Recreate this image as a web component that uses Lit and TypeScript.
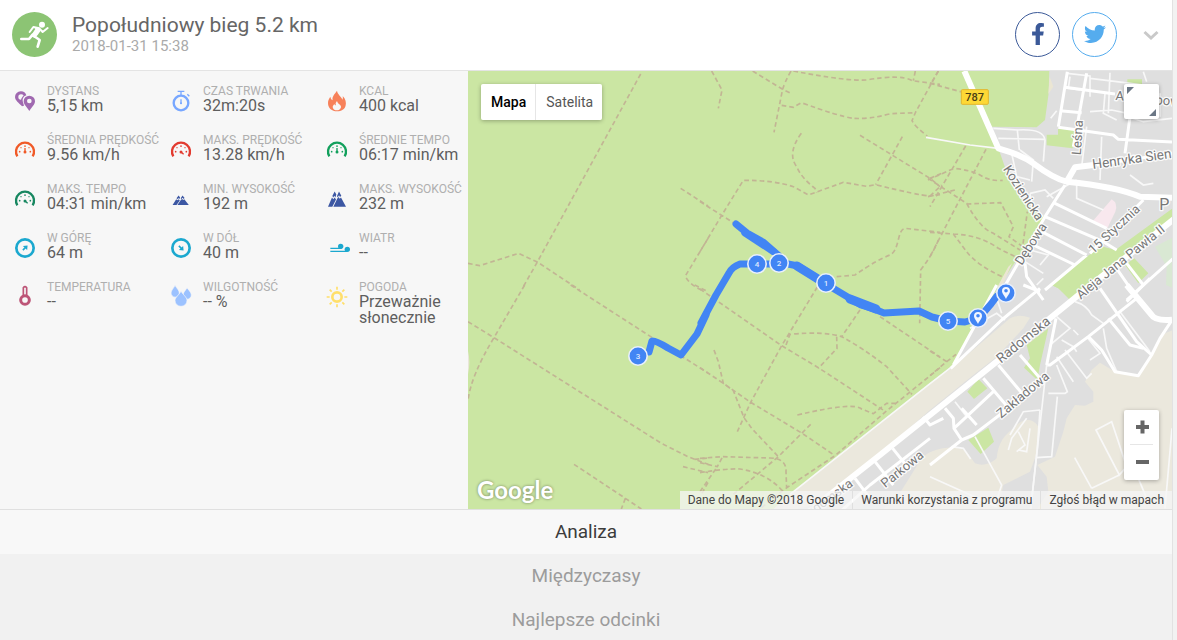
import { LitElement, html, svg, css, type SVGTemplateResult } from "lit";
import { customElement, state, property } from "lit/decorators.js";

interface Stat {
  label: string;
  value: string;
  icon: SVGTemplateResult;
}

const gauge = (color: string, dx: number, dy: number) => svg`
  <path d="M7 49 A27 27 0 1 1 53 49" fill="none" stroke=${color} stroke-width="7" />
  <g fill=${color}>
    <rect x="28" y="16" width="4" height="5" /><circle cx="18" cy="23" r="2" /><circle cx="42" cy="23" r="2" />
    <circle cx="14" cy="35" r="2.5" /><circle cx="46" cy="35" r="2.5" /><circle cx="30" cy="36" r="4.5" />
  </g>
  <path d="M30 36 l${dx} ${dy}" stroke=${color} stroke-width="4" />`;

const peaks = svg`
  <path d="M2 52 L14 25 L18 30 L22 25 L26 31 L15 52 Z M18 52 L30 28 L34 24 L37 29 L41 25 L56 52 Z" fill="#3c57a3" />
  <path d="M15 21 L22 8 L27 17 L24 25 L21 20 L18 25 Z M29 21 L35 8 L42 20 L38 24 L35 19 L31 25 Z" fill="#3c57a3" />`;

const arrowDisc = (angle: number) => svg`
  <circle cx="30" cy="30" r="26" fill="none" stroke="#1ba8cf" stroke-width="8" />
  <g transform="rotate(${angle} 30 30)"><path d="M21 30 H32" stroke="#1ba8cf" stroke-width="5" /><path d="M30 21 L41 30 L30 39 Z" fill="#1ba8cf" /></g>`;

const STATS: Stat[] = [
  {
    label: "DYSTANS", value: "5,15 km",
    icon: svg`<path fill-rule="evenodd" fill="#a069b0" d="M17 1 A17 17 0 0 1 34 13 C25 16 21 24 24 34 L27 44 L21 46 C12 36 0 28 0 18 A17 17 0 0 1 17 1 Z M18 10 A8 8 0 1 0 18 26 C20 20 23 15 26 14 A9 9 0 0 0 18 10 Z" />
      <path fill-rule="evenodd" fill="#a069b0" d="M43 14 A17 17 0 0 1 60 31 C60 41 49 50 43 60 C37 50 26 41 26 31 A17 17 0 0 1 43 14 Z M43 23 A7 7 0 1 0 43 37 A7 7 0 1 0 43 23 Z" />`,
  },
  {
    label: "CZAS TRWANIA", value: "32m:20s",
    icon: svg`<circle cx="30" cy="36" r="22" fill="none" stroke="#78a7ff" stroke-width="7" />
      <path d="M20 1 H40 M30 1 V12 M49 10 L55 16 M30 25 V39" stroke="#78a7ff" stroke-width="4" /><circle cx="30" cy="37" r="3" fill="#78a7ff" />`,
  },
  {
    label: "KCAL", value: "400 kcal",
    icon: svg`<path fill="#f7815a" fill-rule="evenodd" d="M30 -1 C31 10 43 16 46 26 C48 22 48 18 47 15 C56 24 58 35 56 43 C54 55 43 61 30 61 C15 61 3 52 3 36 C3 27 7 22 10 17 C11 23 13 26 17 28 C14 17 23 9 30 -1 Z M30 30 C32 40 43 40 42 49 C40 57 34 58 30 58 C23 58 17 54 17 47 C18 44 20 41 22 39 C23 42 25 43 27 43 C24 37 27 34 30 30 Z" />`,
  },
  { label: "ŚREDNIA PRĘDKOŚĆ", value: "9.56 km/h", icon: gauge("#f05a28", 0, -12) },
  { label: "MAKS. PRĘDKOŚĆ", value: "13.28 km/h", icon: gauge("#e23b30", 8, 7) },
  { label: "ŚREDNIE TEMPO", value: "06:17 min/km", icon: gauge("#12a05c", 0, -12) },
  { label: "MAKS. TEMPO", value: "04:31 min/km", icon: gauge("#178760", 8, 7) },
  { label: "MIN. WYSOKOŚĆ", value: "192 m", icon: svg`<g transform="translate(3 14) scale(0.9 0.66)">${peaks}</g>` },
  { label: "MAKS. WYSOKOŚĆ", value: "232 m", icon: svg`<g transform="translate(1 -1) scale(1 1.05)">${peaks}</g>` },
  { label: "W GÓRĘ", value: "64 m", icon: arrowDisc(-45) },
  { label: "W DÓŁ", value: "40 m", icon: arrowDisc(45) },
  {
    label: "WIATR", value: "--",
    icon: svg`<path d="M10 31 H44 M10 40 H60" stroke="#1ba8cf" stroke-width="4" /><circle cx="41" cy="25" r="8" fill="#1ba8cf" /><circle cx="61" cy="34" r="8" fill="#1ba8cf" />`,
  },
  {
    label: "TEMPERATURA", value: "--",
    icon: svg`<circle cx="30" cy="39" r="13" fill="none" stroke="#bd5577" stroke-width="9" /><path d="M25 28 V2 Q30 -4 35 2 V28" fill="none" stroke="#bd5577" stroke-width="5" />`,
  },
  {
    label: "WILGOTNOŚĆ", value: "-- %",
    icon: svg`<g fill="#9cc2ff" stroke="#f7f7f7" stroke-width="2"><path d="M12 -5 C17 4 25 10 25 18 A12 12 0 0 1 0 18 C0 10 8 4 12 -5 Z" /><path d="M48 2 C52 9 61 15 61 24 A12 12 0 0 1 36 24 C36 16 44 10 48 2 Z" /><path d="M30 12 C36 24 48 30 48 41 A18 17 0 0 1 12 41 C12 30 25 24 30 12 Z" /></g>`,
  },
  {
    label: "POGODA", value: "Przeważnie słonecznie",
    icon: svg`<circle cx="30" cy="30" r="14" fill="none" stroke="#ffdf6b" stroke-width="8" />
      <path d="M30 -1 V8 M30 52 V61 M-1 30 H8 M52 30 H61 M8 8 L14 14 M46 46 L52 52 M52 8 L46 14 M14 46 L8 52" stroke="#ffdf6b" stroke-width="5" />`,
  },
];

const TABS = ["Analiza", "Międzyczasy", "Najlepsze odcinki"];

interface Trails { x: number; y: number; d: string }

const TRAILS: Trails[] = [
  { x: 0, y: -3, d: "M518 12 L208 576 L162 657 M0 580 L35 587 L152 550 L208 576 L335 660 M638 355 L720 408 M720 505 L652 618 Q662 642 700 660" },
  { x: 696, y: -3, d: "M35 3 L66 60 L55 115 M158 3 L248 58 L272 70 M273 3 Q252 40 247 62 L222 187 M280 3 Q440 34 500 30 Q600 12 637 32 L720 43 M646 3 L640 32 M245 106 L280 112 L304 98 Q420 140 460 145 Q510 148 572 131 L647 128 M715 3 L647 126 L636 152 Q645 170 682 198 M304 190 Q260 250 290 290 Q305 325 345 355 L350 368 M480 196 L690 325 L720 350 M607 200 L527 344 M0 395 L100 458 M0 545 L65 436 L130 331 Q220 330 280 350 L325 375 L430 337 L500 349 L527 344 Q650 375 690 378 L720 374 M410 620 L465 615 Q530 570 570 555 C600 540 590 480 615 475 L720 487 M715 510 Q700 550 662 600 L659 760 M690 325 L725 310 M690 378 L725 345" },
  { x: 1386, y: -3, d: "M25 3 L0 45 M0 40 L95 66 M107 228 L0 410 M168 238 L0 560 M-6 330 L72 295 Q120 300 150 315 Q180 335 218 331 M-6 325 L110 400 Q150 475 190 490 L270 540 M-6 380 L75 360 M110 402 L212 398 L250 470 L237 500 L278 530 L292 425 M0 487 L70 492 L110 545 Q140 585 220 622 M70 492 Q150 495 205 535 L270 567" },
  { x: 0, y: 642, d: "M170 0 L78 158 Q10 270 0 345 M0 110 L78 158 L580 475 L660 515 L720 538 M308 0 L553 158 L720 264 M680 0 L720 20 M318 538 L472 640 L520 672 M472 640 L460 672 M645 545 L720 563 M680 523 L720 519 M702 625 L720 592" },
  { x: 696, y: 642, d: "M0 12 L245 182 L355 248 L557 380 M352 6 L245 182 L152 352 L112 440 M42 195 L55 230 L70 295 L100 317 L132 398 L155 430 L235 515 M0 248 L70 295 L152 352 L305 444 L405 512 M258 180 L270 148 Q370 138 425 155 Q490 190 560 245 L636 328 M480 75 L425 155 M410 155 L411 190 L355 250 M540 95 L720 216 M720 248 L557 380 L405 512 L250 615 L180 672 M292 390 Q460 350 485 372 L520 386 L560 355 L592 355 M332 418 L235 515 L100 628 M0 520 L65 515 L210 519 Q260 520 258 560 L260 610 M0 533 L52 545 L68 515 M0 563 Q80 550 120 552 Q200 565 245 615 M0 620 L52 545" },
  { x: 1386, y: 642, d: "M0 198 L50 230 L0 272 M50 230 L78 208" },
];

const LABELS: { text: string; x: number; y: number; angle: number; size?: number }[] = [
  { text: "Leśna", x: 1386 + 452, y: 253, angle: -86 },
  { text: "Henryka Sien", x: 1386 + 489, y: 294, angle: -8, size: 41 },
  { text: "Kozienicka", x: 1386 + 218, y: 294, angle: 57 },
  { text: "Dębowa", x: 1386 + 275, y: 585, angle: -57 },
  { text: "15 Stycznia", x: 1386 + 490, y: 550, angle: -43, size: 38 },
  { text: "Aleja Jana Pawła II", x: 1386 + 452, y: 686, angle: -39 },
  { text: "Radomska", x: 1386 + 213, y: 878, angle: -39, size: 41 },
  { text: "Zakładowa", x: 1386 + 214, y: 1043, angle: -40 },
  { text: "Parkowa", x: 696 + 556, y: 1252, angle: -39 },
  { text: "Radomska", x: 696 + 312, y: 1352, angle: -36 },
  { text: "A", x: 1386 + 556, y: 87, angle: 4 },
  { text: "pow", x: 1386 + 676, y: 100, angle: 4 },
];

const KM_MARKS = [
  { n: "3", x: 638, y: 356 },
  { n: "4", x: 757, y: 264 },
  { n: "2", x: 779, y: 263 },
  { n: "1", x: 826, y: 283 },
  { n: "5", x: 948, y: 321 },
];
const PINS = [{ x: 978, y: 318 }, { x: 1006, y: 293 }];

@customElement("stat-list")
class StatList extends LitElement {
  @property({ attribute: false }) stats: Stat[] = [];

  static styles = css`
    :host { display: block; min-width: 0; }
    .list { margin: 0; display: grid; grid-template-columns: repeat(3, minmax(0, 1fr)); row-gap: 20px; padding-top: 14px; }
    .stat { display: grid; grid-template-columns: 20px minmax(0, 1fr); grid-template-rows: 13px auto; column-gap: 12px; padding-left: 15px; align-items: start; align-content: start; }
    .icon { grid-row: 1 / span 2; width: 20px; height: 20px; margin-top: 6px; overflow: visible; }
    .label { font-size: 12px; line-height: 13px; color: #afafaf; white-space: nowrap; }
    .value { margin: 0; font-size: 16px; line-height: 16px; color: #5e5e5e; }
  `;

  render() {
    return html`<dl class="list">
      ${this.stats.map((s) => html`<div class="stat">
        <svg class="icon" viewBox="0 0 60 60" aria-hidden="true">${s.icon}</svg>
        <dt class="label">${s.label}</dt>
        <dd class="value">${s.value}</dd>
      </div>`)}
    </dl>`;
  }
}

@customElement("route-map")
class RouteMap extends LitElement {
  @state() private view = "Mapa";

  static styles = css`
    :host { display: block; position: relative; overflow: hidden; background: #cbe6a3; min-width: 0; min-height: 438px; }
    .canvas { position: absolute; inset: 0; width: 100%; height: 100%; }
    .street { fill: #777; stroke: #fff; stroke-width: 8px; stroke-opacity: 0.85; paint-order: stroke; stroke-linejoin: round; }
    .trail { fill: none; stroke: #c2b594; stroke-width: 5px; stroke-dasharray: 14 9; }
    .thin { fill: none; stroke: #f8f8f8; stroke-width: 5px; }
    .lane { fill: none; stroke: #fff; stroke-width: 9px; stroke-linejoin: round; }
    .road { fill: none; stroke: #fff; stroke-width: 18px; stroke-linejoin: round; }
    .types { position: absolute; top: 13px; left: 13px; display: flex; border-radius: 2px; overflow: hidden; box-shadow: 0 1px 4px rgba(0, 0, 0, 0.3); }
    .type { font: 400 14px/36px Roboto, sans-serif; border: 0; padding: 0 9px 0 10px; background: #fff; color: #565656; height: 36px; }
    .type + .type { border-left: 1px solid #e6e6e6; }
    .type.on { color: #000; font-weight: 500; }
    .full, .zoom { position: absolute; right: 13px; width: 35px; background: #fff; border-radius: 2px; box-shadow: 0 1px 4px rgba(0, 0, 0, 0.3); }
    .full { top: 13px; height: 35px; border: 0; padding: 0; }
    .full svg, .step svg { display: block; width: 35px; height: 35px; }
    .zoom { bottom: 29px; display: flex; flex-direction: column; }
    .step { border: 0; padding: 0; background: none; height: 35px; }
    .rule { height: 1px; margin: -1px 6px 0; background: #e6e6e6; }
    .google { position: absolute; left: 9px; bottom: 3px; font: 700 24px/32px Lato, sans-serif; color: #fff; text-decoration: none; text-shadow: 0 0 3px rgba(0, 0, 0, 0.45); }
    .credits { position: absolute; right: 0; bottom: 0; display: flex; gap: 1px; font-size: 12px; line-height: 18px; color: #444; white-space: nowrap; }
    .credit { padding: 0 8px; background: rgba(245, 245, 245, 0.75); color: #444; text-decoration: none; }
  `;

  private terrain() {
    return svg`
      <g transform="translate(1386 -3)">
        <path fill="#dfdfdf" d="M358 0 L356 70 L345 150 L320 172 L183 170 L205 235 L235 320 L270 385 L345 440 L200 660 L130 775 L70 885 L0 940 L-490 1335 H800 V0 Z" />
        <path fill="#ebe6d3" d="M359 20 L370 50 L355 72 Z M235 590 L246 580 L215 650 L200 655 Z" />
        <path fill="#cbe6a3" d="M592 28 H636 V62 H592 Z M384 176 L435 180 L428 235 L350 226 V194 H384 Z M741 405 L556 540 L520 530 L490 545 L432 590 L365 645 L385 655 L425 690 L556 590 L741 450 Z M585 585 L613 565 L655 610 L625 640 Z" />
        <path fill="#d9e8d3" d="M741 495 L675 530 L710 590 L708 645 L741 660 Z" />
        <path fill="#f8e8ee" d="M545 388 Q565 400 556 425 L532 475 L486 456 Z" />
      </g>
      <g transform="translate(1386 642)">
        <path fill="#ebe8dd" d="M65 250 L240 100 Q265 86 300 98 L280 130 L200 215 L130 270 L0 375 L-320 655 L-490 690 L-420 628 L0 295 Z" />
        <path fill="#ebe8dd" d="M741 130 L705 145 L680 170 L665 210 L625 272 L555 260 L510 233 L485 255 L465 290 L490 320 L490 350 L465 362 L435 360 L410 400 L400 440 L375 515 L322 540 L350 575 L355 620 L310 690 H741 Z" />
        <path fill="#ebe8dd" d="M-25 520 C0 490 80 475 110 500 L135 535 C160 545 185 535 200 520 C205 470 225 450 250 430 C280 395 310 400 325 425 L322 500 L300 560 L220 600 L200 690 H-160 L-100 640 Z" />
        <path fill="#cbe6a3" d="M112 320 L145 282 L172 310 L132 342 Z M115 465 L175 428 L192 470 L152 507 Z M355 130 L330 240 L322 285 L282 248 L300 220 L290 180 Z M365 0 L410 0 L445 25 L420 45 L385 10 Z" />
      </g>`;
  }

  private streets() {
    return svg`
      <g transform="translate(1386 -3)">
        <path class="thin" d="M-12 202 L120 225 L205 235 M190 175 L262 180 L268 240 M205 205 L345 208 M262 180 Q340 175 345 210 L340 275 M270 240 L310 270 L305 335 M245 250 L260 320 L300 330 M362 145 L380 122 M412 10 L480 18 V80 M420 20 L415 55 L450 60 M540 8 L535 130 M480 25 L560 35 L640 45 M525 70 L520 130 L560 150 M480 125 L545 120 L640 140 M690 140 V70 M640 5 L650 35 M515 200 L510 330 M470 170 L455 290 M595 140 L640 155 L726 145 M300 370 L345 360 L370 385 M300 370 L305 405 L340 440 M350 380 L440 330 M440 340 V385 L520 420 M600 315 L640 345 L670 340 M300 540 L355 555 L330 585 M285 575 L340 610" />
        <path class="lane" d="M412 5 L385 170 M470 10 L430 230 M405 52 L555 72 M390 122 L455 128 M385 172 L550 195 L565 208 L726 216 M600 140 L585 250 M726 250 L500 285 M405 345 L345 440 L200 690 M375 400 L530 475 M345 440 L520 515 L560 540 M335 485 L470 555 M310 525 L435 585 M470 555 L345 660 M640 390 L480 550 M285 580 L290 620 L340 690 M556 590 L625 690 M590 580 L640 645 M741 555 L590 690" />
        <path class="road" d="M103 3 L205 235 Q275 255 310 280 Q370 325 410 335 Q560 350 630 380 L726 383 M410 335 L435 292 L490 285" />
      </g>
      <g transform="translate(1386 642)">
        <path class="thin" d="M120 130 L200 85 L225 105 M200 40 L215 85 M340 -20 L320 0 M435 50 Q470 60 485 90 L520 115 M380 95 L420 130 L360 180 M395 165 L430 185 L440 200 M430 135 L445 150 M380 215 L430 290 M405 195 L470 280 L485 265 M470 155 L510 205 L480 225 M520 130 L530 190 L560 260 M570 80 L660 200 M355 325 L405 325 L412 320 L380 240 M382 335 L365 515 L318 518 M330 375 L322 490 L300 690 M330 375 L280 380 L240 450 M290 400 L245 460 L235 495 M265 440 L285 480 L260 500 M300 430 L290 500 L265 495 M0 575 L200 665 M135 455 L215 600 L195 660 M498 435 L545 410 L590 545 L568 570 Z M434 518 L485 610 M485 610 L568 570 M625 580 L650 640 M726 430 L705 670 M75 350 L110 395 M65 485 L100 490 L122 522" />
        <path class="lane" d="M330 10 L215 105 L62 250 M200 0 L130 130 L70 240 M280 0 L330 20 M510 10 L620 170 L665 210 L625 272 L555 260 L515 195 L475 155 L360 240 L350 240 M620 40 L475 155 M535 100 L600 180 L640 190 M590 50 L660 -20 M378 100 L350 240 M270 210 L330 280 L300 320 L130 450 L95 465 L0 540 M205 240 L280 330 M160 280 L245 380 M45 370 L70 400 L72 430 L95 465 M72 430 L190 320 M95 370 L140 420 M726 105 L690 160 L665 210" />
        <path class="road" d="M-340 660 L-150 510 L0 390 L200 230 L372 90 L470 10 L741 -205 M590 0 L665 90 Q675 108 726 104" />
        <path class="lane" d="M-225 580 L-180 640 M-165 530 L-110 600 M-112 490 L-60 555 M0 460 L-180 600 L-280 690 M-20 395 L0 420 L40 400" />
        <path class="thin" d="M350 240 L300 690 M62 248 L0 296 L-420 628" />
      </g>`;
  }

  private route() {
    return svg`
      <g transform="translate(-1404 -213) scale(3)">
        <g fill="none" stroke="#4285f4" stroke-width="7" stroke-linecap="round" stroke-linejoin="round">
          <path d="M736 224 L747 233 L763 242 L779 256" />
          <path d="M745 233 L774 252" />
          <path d="M779 264 H740 Q732 267 729 273 L716 295 L701 323" />
          <path d="M783 263 L798 266 L826 284 L846 296 L861 305 L874 309 L884 313 L919 311 L932 317 L948 321 L965 322 L979 318 L991 304 L997 296 L1006 293" />
          <path d="M797 266 L826 284 M850 299 L876 309" stroke-width="9" />
          <path d="M706 315 L697 334 L681 355 L668 348 Q655 340 652 341 L649 352" />
        </g>
        <g font-family="Roboto, sans-serif" font-size="8" font-weight="500" text-anchor="middle">
          ${KM_MARKS.map((m) => svg`<circle cx=${m.x} cy=${m.y} r="9.2" fill="#4285f4" stroke="#eaf0fb" stroke-width="1.6" /><text x=${m.x} y=${m.y + 3} fill="#dfe9ff">${m.n}</text>`)}
        </g>
        ${PINS.map((p) => svg`<g transform="translate(${p.x} ${p.y})"><circle r="9.2" fill="#4285f4" stroke="#eaf0fb" stroke-width="1.6" /><path fill-rule="evenodd" fill="#f2f6ff" d="M0 -6 A4 4 0 0 1 4 -2 C4 1 1 3 0 6 C-1 3 -4 1 -4 -2 A4 4 0 0 1 0 -6 Z M0 -4 A1.8 1.8 0 1 0 0 -0.4 A1.8 1.8 0 1 0 0 -4 Z" /></g>`)}
      </g>`;
  }

  render() {
    return html`
      <svg class="canvas" viewBox="0 0 2112 1314" preserveAspectRatio="xMinYMin slice" role="img" aria-label="Trasa biegu">
        ${this.terrain()}
        ${TRAILS.map((t) => svg`<path class="trail" transform="translate(${t.x} ${t.y})" d=${t.d} />`)}
        ${this.streets()}
        <path d="M0 840 Q8 870 0 910 Z" fill="#e9e6d8" />
        <g font-family="Roboto, sans-serif">
          ${LABELS.map((l) => svg`<text class="street" font-size=${l.size ?? 39} transform="translate(${l.x} ${l.y}) rotate(${l.angle})">${l.text}</text>`)}
          <text class="street" font-size="48" x="2074" y="418">P</text>
          <rect x="1480" y="56" width="81" height="44" rx="3" fill="#fdd835" stroke="#e3b62c" stroke-width="3" />
          <text x="1520" y="90" font-size="33" font-weight="500" text-anchor="middle" fill="#4b4014">787</text>
        </g>
        ${this.route()}
      </svg>
      <div class="types">
        ${["Mapa", "Satelita"].map((v) => html`<button type="button" class="type ${this.view === v ? "on" : ""}" @click=${() => (this.view = v)}>${v}</button>`)}
      </div>
      <button type="button" class="full" aria-label="Pełny ekran">
        <svg viewBox="0 0 35 35"><path fill="#6b7785" d="M3 3 H10 L3 10 Z M32 32 H25 L32 25 Z" /></svg>
      </button>
      <div class="zoom">
        <button type="button" class="step" aria-label="Powiększ"><svg viewBox="0 0 35 35"><path d="M12 17 H25 M18.500 10.500 V23.500" stroke="#666" stroke-width="4" /></svg></button>
        <div class="rule"></div>
        <button type="button" class="step" aria-label="Pomniejsz"><svg viewBox="0 0 35 35"><path d="M12 17 H25" stroke="#666" stroke-width="4" /></svg></button>
      </div>
      <a class="google" href="#google">Google</a>
      <div class="credits">
        <span class="credit">Dane do Mapy ©2018 Google</span>
        <a class="credit" href="#warunki">Warunki korzystania z programu</a>
        <a class="credit" href="#blad">Zgłoś błąd w mapach</a>
      </div>`;
  }
}

@customElement("app-root")
class AppRoot extends LitElement {
  @state() private tab = 0;

  static styles = css`
    :host { display: block; min-height: 100vh; padding-right: 4px; box-sizing: border-box; background: #f2f2f2; font-family: Roboto, sans-serif; }
    .card { min-height: 100vh; box-sizing: border-box; border-right: 1px solid #e2e2e2; background: #f1f1f1; }
    .head { display: flex; align-items: center; box-sizing: border-box; height: 71px; padding: 0 13px 2px 12px; background: #fff; border-bottom: 1px solid #e4e4e4; }
    .sport { width: 45px; height: 45px; margin-right: 15px; }
    .titles { flex: 1; }
    .title { margin: 0; font-size: 21px; font-weight: 400; line-height: 24px; color: #666; }
    .date { font-size: 15px; line-height: 19px; color: #aaa; display: block; }
    .social { display: flex; gap: 12px; }
    .share { display: grid; place-items: center; box-sizing: border-box; width: 45px; height: 45px; border: 1px solid; border-radius: 50%; }
    .fb { color: #3b5998; }
    .tw { color: #55acee; }
    .share svg { width: 22px; height: 22px; fill: currentColor; }
    .more { border: 0; background: none; padding: 0; margin-left: 26px; width: 16px; height: 16px; }
    .more svg { display: block; }
    .body { display: grid; grid-template-columns: minmax(0, 468fr) minmax(0, 704fr); background: #f7f7f7; border-bottom: 1px solid #e0e0e0; }
    .tabs { display: flex; flex-direction: column; }
    .tab { border: 0; padding: 0; height: 44px; background: #f1f1f1; color: #9c9c9c; font: 400 19px/44px Roboto, sans-serif; }
    .tab.on { background: #f8f8f8; color: #3c3c3c; }
  `;

  render() {
    return html`<div class="card">
      <header class="head">
        <svg class="sport" viewBox="0 0 135 135" aria-hidden="true">
          <circle cx="67.500" cy="67.500" r="67.500" fill="#8cc474" />
          <circle cx="90" cy="38" r="9" fill="#fff" />
          <path d="M66 44 L82 48 L86 56 L77 69 L68 78 L56 72 L70 51 Z" fill="#fff" />
          <g fill="none" stroke="#fff" stroke-linecap="round" stroke-linejoin="round">
            <path stroke-width="6" d="M53 60 L64 45 L82 49 L92 60 L107 48" />
            <path stroke-width="8" d="M62 68 L51 81 L28 81 M66 72 L83 84 L77 104" />
          </g>
        </svg>
        <div class="titles">
          <h1 class="title">Popołudniowy bieg 5.2 km</h1>
          <time class="date" datetime="2018-01-31T15:38">2018-01-31 15:38</time>
        </div>
        <div class="social">
          <a class="share fb" href="#facebook" aria-label="Facebook"><svg viewBox="0 0 320 512"><path d="M279.140 288l14.220-92.660h-88.910v-60.130c0-25.350 12.420-50.060 52.240-50.060h40.420V6.260S260.430 0 225.360 0c-73.220 0-121.080 44.380-121.080 124.720v70.620H22.890V288h81.390v224h100.170V288z" /></svg></a>
          <a class="share tw" href="#twitter" aria-label="Twitter"><svg viewBox="0 0 512 512"><path d="M459.370 151.716c.325 4.548.325 9.097.325 13.645 0 138.720-105.583 298.558-298.558 298.558-59.452 0-114.680-17.219-161.137-47.106 8.447.974 16.568 1.299 25.340 1.299 49.055 0 94.213-16.568 130.274-44.832-46.132-.975-84.792-31.188-98.112-72.772 6.498.974 12.995 1.624 19.818 1.624 9.421 0 18.843-1.300 27.614-3.573-48.081-9.747-84.143-51.980-84.143-102.985v-1.299c13.969 7.797 30.214 12.670 47.431 13.319-28.264-18.843-46.781-51.005-46.781-87.391 0-19.492 5.197-37.360 14.294-52.954 51.655 63.675 129.300 105.258 216.365 109.807-1.624-7.797-2.599-15.918-2.599-24.040 0-57.828 46.782-104.934 104.934-104.934 30.213 0 57.502 12.670 76.670 33.137 23.715-4.548 46.456-13.320 66.599-25.340-7.798 24.366-24.366 44.833-46.132 57.827 21.117-2.273 41.584-8.122 60.426-16.243-14.292 20.791-32.161 39.308-52.628 54.253z" /></svg></a>
        </div>
        <button type="button" class="more" aria-label="Więcej"><svg width="16" height="16" viewBox="0 0 16 16"><path d="M1.500 6 L8 12 L14.500 6" fill="none" stroke="#c9c9c9" stroke-width="3" /></svg></button>
      </header>
      <section class="body">
        <stat-list .stats=${STATS}></stat-list>
        <route-map></route-map>
      </section>
      <nav class="tabs">
        ${TABS.map((t, i) => html`<button type="button" class="tab ${this.tab === i ? "on" : ""}" @click=${() => (this.tab = i)}>${t}</button>`)}
      </nav>
    </div>`;
  }
}
